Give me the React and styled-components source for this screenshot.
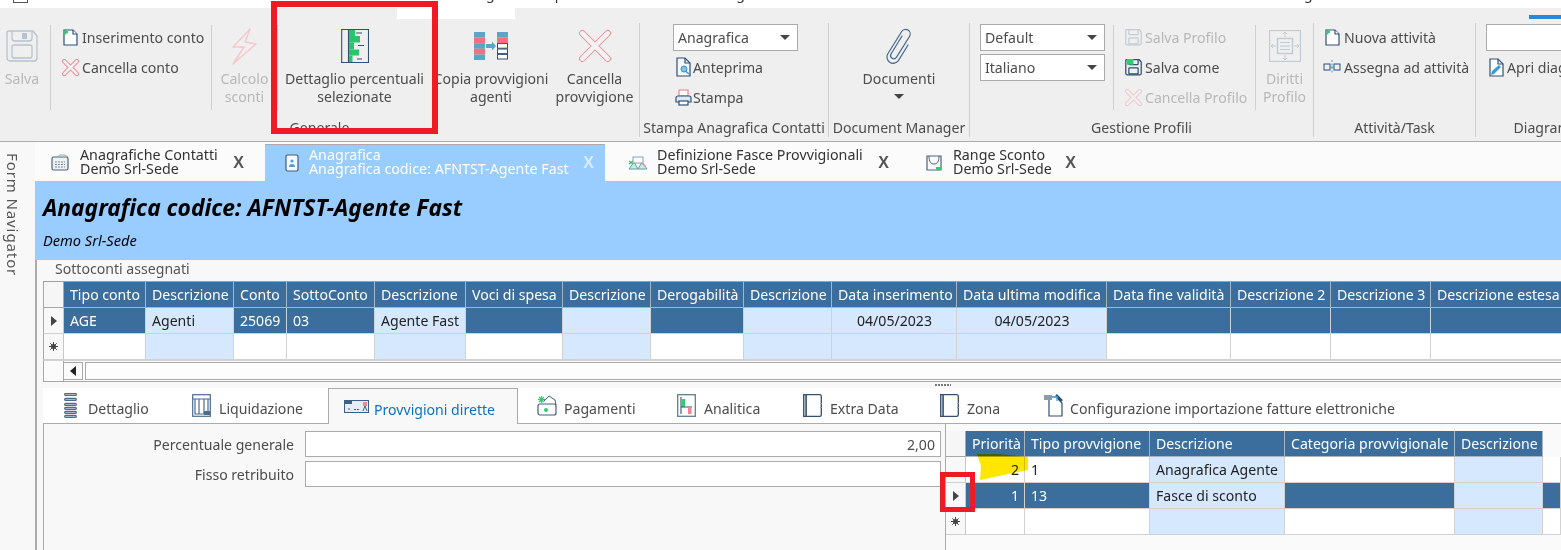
import React from "react";
import styled, { createGlobalStyle } from "styled-components";

const FONT = `"Noto Sans", "Open Sans", "Liberation Sans", sans-serif`;
const NAVY = "#2f4f74";
const PINK = "#f7858f";
const SELECT = "#3b6e9c";
const READONLY = "#d6e8fe";

const Global = createGlobalStyle`
  html, body { margin: 0; padding: 0; background: #f8f8f8; }
  body { width: 1561px; height: 550px; overflow: hidden; font-family: ${FONT}; font-size: 14.1px; color: #4c4c4c; }
  * { box-sizing: border-box; }
`;

const Page = styled.div`
  position: relative;
  width: 1561px;
  height: 550px;
  overflow: hidden;
  display: flex;
  flex-direction: column;
`;

/* ---------- title strip ---------- */
const TitleStrip = styled.div`
  height: 8px;
  flex: none;
  background: #fff;
  overflow: hidden;
  display: flex;
  align-items: flex-end;
`;
const TopFrag = styled.span`
  flex: none;
  margin-left: ${(p) => p.$ml}px;
  height: 8px;
  line-height: 0;
  font-size: 14px;
  color: #333;
  transform: translateY(-6px);
`;
const TopIconStub = styled.span`
  flex: none;
  width: 15px;
  height: 3px;
  margin-left: 13px;
  align-self: flex-start;
  border: 1px solid #555;
  border-top: 0;
`;

/* ---------- ribbon ---------- */
const Ribbon = styled.div`
  flex: none;
  height: 134px;
  background: #efefef;
  border-bottom: 1px solid #ababab;
  overflow: hidden;
  display: flex;
  flex-direction: column;
`;
const RibbonTabLine = styled.div`
  flex: none;
  height: 15px;
  display: flex;
  align-items: flex-start;
`;
const RibbonActive = styled.div`
  width: 118px;
  height: 11px;
  margin-left: 397px;
  background: #fff;
`;
const RibbonMark = styled.div`
  width: 32px;
  height: 4px;
  margin-left: auto;
  margin-top: 7px;
  background: #2b88d8;
`;
const Groups = styled.div`
  display: flex;
  height: 114px;
`;
const Group = styled.div`
  flex: none;
  width: ${(p) => p.$w}px;
  height: 114px;
  border-right: 1px solid #cfcfcf;
  display: flex;
  flex-direction: column;
`;
const GroupBody = styled.div`
  flex: 1;
  display: flex;
  min-height: 0;
`;
const GroupLabel = styled.div`
  flex: none;
  height: 20px;
  line-height: 22px;
  text-align: center;
  white-space: nowrap;
`;
const VSep = styled.div`
  flex: none;
  width: 1px;
  height: 85px;
  margin-top: 2px;
  background: #cfcfcf;
`;
const LargeBtn = styled.div`
  flex: none;
  width: ${(p) => p.$w}px;
  margin-right: ${(p) => p.$mr || 0}px;
  padding-top: 5px;
  display: flex;
  flex-direction: column;
  align-items: center;
  color: ${(p) => (p.$off ? "#b8b8b8" : "#4c4c4c")};
  line-height: 18px;
  text-align: center;
  white-space: nowrap;
`;
const LargeIcon = styled.div`
  height: 36px;
  margin-bottom: 6px;
  display: flex;
  align-items: center;
  justify-content: center;
`;
const SmallCol = styled.div`
  flex: none;
  width: ${(p) => p.$w}px;
  margin-top: -1px;
  padding-left: ${(p) => p.$pl}px;
  display: flex;
  flex-direction: column;
`;
const SmallBtn = styled.div`
  height: 30px;
  display: flex;
  align-items: center;
  gap: ${(p) => p.$gap ?? 2}px;
  white-space: nowrap;
  color: ${(p) => (p.$off ? "#b8b8b8" : "#4c4c4c")};
`;
const SmallIcon = styled.span`
  flex: none;
  width: 20px;
  height: 20px;
  display: flex;
  align-items: center;
  justify-content: center;
`;
const ComboWrap = styled.div`
  height: 30px;
  display: flex;
  align-items: center;
`;
const Combo = styled.div`
  width: 125px;
  height: 27px;
  padding: 0 7px 0 4px;
  background: #fff;
  border: 1px solid #ababab;
  display: flex;
  align-items: center;
  justify-content: space-between;
`;
const Caret = styled.i`
  display: block;
  width: 0;
  height: 0;
  margin-top: ${(p) => p.$mt || 0}px;
  border-left: 5px solid transparent;
  border-right: 5px solid transparent;
  border-top: 5px solid #444;
`;

/* ---------- body ---------- */
const Body = styled.div`
  flex: 1;
  min-height: 0;
  display: flex;
`;
const FormNav = styled.div`
  flex: none;
  width: 35px;
  padding: 11px 12px 0 0;
  writing-mode: vertical-rl;
  font-size: 15px;
  letter-spacing: 0.9px;
  color: #555;
  white-space: nowrap;
`;
const Main = styled.div`
  flex: 1;
  min-width: 0;
  display: flex;
  flex-direction: column;
  overflow: hidden;
`;
const DocTabs = styled.div`
  flex: none;
  height: 39px;
  display: flex;
  align-items: flex-end;
  background: #fbfbfb;
`;
const DocTab = styled.div`
  flex: none;
  width: ${(p) => p.$w}px;
  height: 37px;
  padding: 0 ${(p) => p.$pr}px 0 ${(p) => p.$pl}px;
  display: flex;
  align-items: center;
  gap: ${(p) => p.$gap}px;
  background: ${(p) => (p.$active ? "#99ccff" : "transparent")};
  border-top: 1px solid ${(p) => (p.$active ? "#ababab" : "transparent")};
  color: ${(p) => (p.$active ? "#fff" : "#333")};
`;
const DocTabText = styled.div`
  flex: 1;
  min-width: 0;
  margin-top: -2px;
  font-size: 14.25px;
  line-height: 14px;
  white-space: nowrap;
`;
const DocClose = styled.span`
  flex: none;
  font-family: "Liberation Sans", sans-serif;
  font-weight: 700;
  font-size: 16px;
  color: ${(p) => (p.$active ? "#d8ebff" : "#555")};
`;
const Content = styled.div`
  flex: 1;
  min-height: 0;
  border-left: 2px solid #ababab;
  display: flex;
  flex-direction: column;
`;
const Header = styled.div`
  flex: none;
  height: 79px;
  margin-left: -2px;
  padding: 13px 0 0 8px;
  background: #99ccff;
  color: #000;
`;
const HeaderTitle = styled.div`
  font-size: 22.8px;
  line-height: 28px;
  font-weight: 700;
  font-style: italic;
  white-space: nowrap;
`;
const HeaderSub = styled.div`
  margin-top: 9px;
  font-size: 14.6px;
  line-height: 18px;
  font-style: italic;
`;
const SectionTitle = styled.div`
  flex: none;
  height: 21px;
  padding: 0 0 0 18px;
  line-height: 18px;
  color: #555;
`;
const GridBox = styled.div`
  flex: none;
  margin-left: ${(p) => p.$ml || 0}px;
  width: ${(p) => p.$width}px;
  display: grid;
  grid-template-columns: ${(p) => p.$cols};
  grid-auto-rows: ${(p) => p.$rowH || 26}px;
  border-top: ${(p) => (p.$noTop ? "0" : "1px solid #a0a0a0")};
`;
const Corner = styled.div`
  background: #f6f6f6;
  border-right: 1px solid #a8a8a8;
  border-bottom: 1px solid #a8a8a8;
  border-left: ${(p) => (p.$noLeft ? "0" : "1px solid #a8a8a8")};
`;
const RowHead = styled.div`
  background: #f8f8f8;
  border-right: 1px solid #c8c8c8;
  border-bottom: 1px solid #d0d0d0;
  border-left: ${(p) => (p.$noLeft ? "0" : "1px solid #a8a8a8")};
  display: flex;
  align-items: center;
  justify-content: center;
  color: #444;
`;
const HeadCell = styled.div`
  background: ${SELECT};
  color: #fff;
  padding-left: 6px;
  display: flex;
  align-items: center;
  white-space: nowrap;
  overflow: hidden;
  border-right: 1px solid #a8b4bf;
  border-bottom: 1px solid #a8b4bf;
`;
const HeadGap = styled.div``;
const Cell = styled.div`
  background: ${(p) => (p.$ro ? READONLY : p.$sel ? SELECT : "#fff")};
  color: ${(p) => (p.$ro ? "#222" : p.$sel ? "#fff" : "#222")};
  padding: 0 5px 0 6px;
  display: flex;
  align-items: center;
  justify-content: ${(p) => (p.$align === "right" ? "flex-end" : p.$align === "center" ? "center" : "flex-start")};
  white-space: nowrap;
  overflow: hidden;
  border-right: 1px solid #d2d2d2;
  border-bottom: 1px solid #d2d2d2;
`;
const ScrollRow = styled.div`
  flex: none;
  margin-left: 6px;
  height: 22px;
  display: flex;
  border: 1px solid #a8a8a8;
  border-top: 1px solid #d2d2d2;
  border-right: 0;
  background: #fbfbfb;
`;
const ScrollHead = styled.div`
  flex: none;
  width: 20px;
  border-right: 1px solid #a8a8a8;
`;
const ScrollBtn = styled.div`
  flex: none;
  width: 19px;
  margin: 1px 0 1px 0;
  border: 1px solid #a8a8a8;
  border-left: 0;
  display: flex;
  align-items: center;
  justify-content: center;
`;
const ScrollTrack = styled.div`
  flex: 1;
  margin: 1px 0 1px 2px;
  border: 1px solid #a8a8a8;
  border-right: 0;
  background: #fdfdfd;
`;
const Splitter = styled.div`
  flex: none;
  height: 6px;
  display: flex;
  align-items: center;
  padding-left: 898px;
`;
const SplitterDots = styled.i`
  display: block;
  width: 16px;
  height: 2px;
  background: repeating-linear-gradient(90deg, #777 0 2px, transparent 2px 3px);
`;
const SubTabs = styled.div`
  flex: none;
  height: 36px;
  margin-left: 6px;
  display: flex;
  align-items: stretch;
  background: #fff;
  border-bottom: 1px solid #ababab;
`;
const SubTab = styled.div`
  flex: none;
  width: ${(p) => p.$w}px;
  padding-left: ${(p) => p.$pl}px;
  display: flex;
  align-items: center;
  gap: ${(p) => p.$gap}px;
  white-space: nowrap;
  color: ${(p) => (p.$active ? "#0a72c4" : "#4c4c4c")};
  background: ${(p) => (p.$active ? "#f8f8f8" : "transparent")};
  border: ${(p) => (p.$active ? "1px solid #ababab" : "0")};
  border-bottom: 0;
  margin-bottom: ${(p) => (p.$active ? "-1px" : "0")};
`;
const SubTabLabel = styled.span`
  margin-top: 6px;
`;
const Panel = styled.div`
  flex: 1;
  min-height: 0;
  margin-left: 6px;
  border-left: 1px solid #ababab;
  display: flex;
`;
const FormPane = styled.div`
  flex: none;
  width: 901px;
  padding: 7px 4px 0 0;
  display: flex;
  flex-direction: column;
  gap: 4px;
`;
const FormRow = styled.div`
  display: flex;
  align-items: center;
  gap: 11px;
`;
const FormLabel = styled.div`
  flex: none;
  width: 250px;
  text-align: right;
`;
const FormInput = styled.div`
  flex: 1;
  height: 26px;
  padding: 0 5px;
  background: #fff;
  border: 1px solid #ababab;
  display: flex;
  align-items: center;
  justify-content: flex-end;
`;
const GridPane = styled.div`
  flex: 1;
  min-width: 0;
  padding-top: 7px;
  border-left: 1px solid #ababab;
  background: #fafafa;
  overflow: hidden;
`;
const RedBox = styled.div`
  position: absolute;
  left: ${(p) => p.$x}px;
  top: ${(p) => p.$y}px;
  width: ${(p) => p.$w}px;
  height: ${(p) => p.$h}px;
  border: ${(p) => p.$t}px solid #ed1c24;
  z-index: 5;
`;
const Highlight = styled.svg`
  position: absolute;
  left: 970px;
  top: 450px;
  mix-blend-mode: multiply;
  z-index: 4;
`;

/* ---------- icons ---------- */
const XIcon = ({ s = 18, off }) => (
  <svg width={s} height={s} viewBox="0 0 32 32" opacity={off ? 0.4 : 1}>
    <path d="M4 4L28 28M28 4L4 28" stroke={PINK} strokeWidth={s > 24 ? 6 : 8} strokeLinecap="round" fill="none" />
    <path d="M4 4L28 28M28 4L4 28" stroke="#f3f3f3" strokeWidth={s > 24 ? 4.4 : 5} strokeLinecap="round" fill="none" />
  </svg>
);
const SaveLarge = () => (
  <svg width="32" height="33" viewBox="0 0 32 33" fill="none" stroke="#b8c2cc" strokeWidth="1.3">
    <path d="M3 1H27L31 6V28a3 3 0 0 1-3 3H4a3 3 0 0 1-3-3V3a2 2 0 0 1 2-2z" />
    <path d="M6 1V8a3 3 0 0 0 3 3H23a3 3 0 0 0 3-3V2" />
    <rect x="16" y="3" width="5" height="6" fill="#b8c2cc" stroke="none" />
    <rect x="6" y="15" width="20" height="13" rx="2" />
  </svg>
);
const SaveSmall = ({ color = NAVY, fill, green }) => (
  <svg width="17" height="17" viewBox="0 0 32 33" fill={fill || "none"} stroke={color} strokeWidth="2.4">
    <path d="M3 1H27L31 6V28a3 3 0 0 1-3 3H4a3 3 0 0 1-3-3V3a2 2 0 0 1 2-2z" />
    <path d="M7 1V9a2 2 0 0 0 2 2H23a2 2 0 0 0 2-2V2" />
    <rect x="7" y="17" width="18" height="12" rx="1.5" />
    {green && <rect x="3" y="0" width="13" height="11" fill="#2ecc71" stroke="none" />}
  </svg>
);
const NewDoc = () => (
  <svg width="15" height="17" viewBox="0 0 15 17" fill="none">
    <path d="M1 1H10L14 5V16H1z" fill="#fff" stroke={NAVY} strokeWidth="1.2" />
    <path d="M10 1V5H14" fill="#fff" stroke={NAVY} strokeWidth="1.2" />
    <path d="M2.5 0.5V5.5M0 3H5" stroke="#2ecc71" strokeWidth="1.8" />
  </svg>
);
const Bolt = () => (
  <svg width="25" height="37" viewBox="0 0 25 37" fill="none">
    <path d="M18 1L1 19H12L1 36L24 16L13 14L18 1z" stroke="#f9c6cb" strokeWidth="1.4" strokeLinejoin="round" />
  </svg>
);
const DettaglioIcon = () => (
  <svg width="28" height="34" viewBox="0 0 28 34">
    <path d="M0 .5H28M0 33.5H28" stroke="#33506f" strokeWidth="1" />
    <path d="M.7 0V34M7.5 0V34M27.5 0V34" stroke="#33506f" strokeWidth="1.1" />
    <rect x="8" y="1" width="6" height="6" fill="#27c66b" />
    <rect x="8" y="7" width="11" height="6.5" fill="#27c66b" />
    <rect x="8" y="13.5" width="5" height="7" fill="#27c66b" />
    <rect x="8" y="20.5" width="10" height="6" fill="#27c66b" />
    <rect x="8" y="26.5" width="3.5" height="6.5" fill="#27c66b" />
    <path d="M15 4H21M17 16.5H23M16 30H21" stroke="#33506f" strokeWidth="1" />
  </svg>
);
const CopiaIcon = () => (
  <svg width="34" height="28" viewBox="0 0 34 28">
    {["#5aa6c4", "#f96f80", "#5aa6c4", "#f96f80", "#5aa6c4"].map((c, i) => (
      <rect key={i} x="0" y={i * 5.6} width="11" height="5.6" fill={c} />
    ))}
    <rect x="23" y="0" width="11" height="5.6" fill="#5aa6c4" />
    <rect x="23" y="5.6" width="11" height="5.6" fill="#f96f80" />
    {[11.6, 17, 22.4].map((y) => (
      <rect key={y} x="23.5" y={y} width="10" height="4.6" fill="#fff" stroke="#33506f" strokeWidth="1" />
    ))}
    <path d="M12 12H18V9.5L22 14L18 18.5V16H12z" fill="#5aa6c4" />
  </svg>
);
const PreviewIcon = () => (
  <svg width="15" height="20" viewBox="0 0 15 20" fill="none">
    <path d="M1 1H9L14 6V19H1z" fill="#f5f8fb" stroke={NAVY} strokeWidth="1.2" />
    <path d="M9 1V6H14" stroke={NAVY} strokeWidth="1.2" />
    <circle cx="8" cy="12" r="3" fill="#7dc4e8" stroke="#3d8fc4" />
    <path d="M10 14.5L13 17" stroke="#3d8fc4" strokeWidth="1.4" />
  </svg>
);
const PrintIcon = () => (
  <svg width="17" height="17" viewBox="0 0 17 17" fill="none">
    <rect x="4" y="1" width="9" height="6" fill="#fff" stroke={PINK} strokeWidth="1.2" />
    <path d="M1 13V9a2 2 0 0 1 2-2H14a2 2 0 0 1 2 2V13z" fill="#dfe8f1" stroke={NAVY} strokeWidth="1.2" />
    <rect x="4" y="12" width="9" height="4" fill="#fff" stroke={NAVY} strokeWidth="1.2" />
  </svg>
);
const ClipIcon = () => (
  <svg width="28" height="37" viewBox="0 0 28 37" fill="none" stroke="#45688d" strokeWidth="1.2" strokeLinecap="round">
    <path d="M17 8L6 26a3.2 3.2 0 0 0 5.4 3.4L24.5 8.5a4.6 4.6 0 0 0-7.8-5L3 25.5a6.6 6.6 0 0 0 1.6 8.7 6.4 6.4 0 0 0 8.8-1.6L23 17" />
  </svg>
);
const DirittiIcon = () => (
  <svg width="32" height="32" viewBox="0 0 32 32" fill="none" stroke="#c0cad4" strokeWidth="1">
    <rect x=".5" y=".5" width="31" height="31" strokeWidth="1.2" />
    <rect x="8.5" y="8.5" width="15" height="15" strokeWidth="1.4" />
    <path d="M11 12.5H21M11 16H21M11 19.5H21" />
    <path d="M16 2V7M14 4L16 2L18 4M16 30V25M14 28L16 30L18 28M2 16H7M4 14L2 16L4 18M30 16H25M28 14L30 16L28 18" />
  </svg>
);
const AssignIcon = () => (
  <svg width="18" height="16" viewBox="0 0 18 16" fill="none">
    <rect x="1" y="5" width="6" height="6" stroke={NAVY} />
    <rect x="11" y="5" width="6" height="6" stroke={NAVY} />
    <path d="M9 1V15" stroke="#3d9fd0" strokeDasharray="2 1.5" />
    <path d="M7 8H11" stroke="#3d9fd0" />
  </svg>
);
const DiagIcon = () => (
  <svg width="15" height="19" viewBox="0 0 15 19" fill="none">
    <path d="M1 1H9L14 6V18H1z" fill="#fff" stroke={NAVY} strokeWidth="1.2" />
    <path d="M9 1V6H14" stroke={NAVY} strokeWidth="1.2" />
    <path d="M2 17L3 13L10 7L12 9L5 16z" fill="#3a9bd4" />
  </svg>
);
const TabContacts = () => (
  <svg width="18" height="18" viewBox="0 0 18 18" fill="none">
    <rect x="1" y="3" width="16" height="13" rx="1.5" fill="#eef1f4" stroke="#4c6580" strokeWidth="1.2" />
    <path d="M4 8H14M4 10.5H14M4 13H14" stroke="#7c8a98" strokeWidth="1.2" strokeDasharray="2 1" />
    <path d="M6 3L9 1H14" stroke="#6cc48c" />
    <path d="M14 1L17 3" stroke={PINK} />
  </svg>
);
const TabBook = () => (
  <svg width="18" height="18" viewBox="0 0 18 18" fill="none">
    <rect x="3" y="1" width="12" height="16" rx="1.5" fill="#f4f8fc" stroke="#3d5f82" strokeWidth="1.2" />
    <circle cx="9" cy="7" r="1.6" fill="#4aa3d8" />
    <path d="M6 13a3 3 0 0 1 6 0z" fill="#4aa3d8" />
  </svg>
);
const TabFasce = () => (
  <svg width="20" height="14" viewBox="0 0 20 14" fill="none">
    <path d="M1 13L6 6L10 13zM10 13L14 6L19 13z" fill="#cfe6e6" stroke="#5aa6a0" />
    <rect x="5" y="1" width="10" height="6" fill="#fff" stroke="#7aa3c4" />
    <path d="M1 5L5 8M5 5L1 8" stroke="#2ecc71" strokeWidth="1.4" />
    <path d="M14 7L17 10" stroke={PINK} strokeWidth="1.4" />
  </svg>
);
const TabRange = () => (
  <svg width="16" height="16" viewBox="0 0 16 16" fill="none">
    <path d="M1 1H15V15H1z" stroke="#4c6580" strokeWidth="1.2" />
    <path d="M3 1C3 7 5 9 8 9S13 7 13 1" stroke="#4c6580" />
    <rect x="10" y="12" width="5" height="3" fill="#2ecc71" />
  </svg>
);
const DettTab = () => (
  <svg width="13" height="25" viewBox="0 0 13 25" fill="none" stroke="#4c6c8f" strokeWidth="1.3">
    {[1, 6, 11, 15, 19, 23].map((y) => (
      <rect key={y} x=".7" y={y - 0.5} width="11.6" height="1.8" rx=".9" />
    ))}
  </svg>
);
const LiquidTab = () => (
  <svg width="19" height="23" viewBox="0 0 19 23" fill="none" stroke="#4c6c8f" strokeWidth="1.2">
    <rect x=".7" y=".7" width="17.6" height="21.6" />
    <path d="M.7 5H18.3M3 5V20H16V5M7 5V20M12 5V20" />
    <rect x="12" y="17" width="6" height="4" fill="#4c6c8f" stroke="none" />
  </svg>
);
const CheckTab = () => (
  <svg width="25" height="13" viewBox="0 0 25 13" fill="none">
    <rect x=".5" y=".5" width="24" height="12" fill="#e4edf5" stroke="#3d5f82" />
    <path d="M1 1H8V4H1z" fill="#3d5f82" />
    <path d="M4 9H7M10 9.5H16" stroke="#3d5f82" strokeDasharray="2 1" />
    <rect x="19" y="2" width="4" height="4" fill={PINK} />
    <path d="M19 11L21 6L23 11" stroke="#3d5f82" />
  </svg>
);
const PayTab = () => (
  <svg width="20" height="21" viewBox="0 0 20 21" fill="none">
    <path d="M6 7L12 1L18 5L19 10" stroke="#3d5f82" />
    <rect x="1" y="9" width="18" height="11" rx="2" fill="#fff" stroke="#3d5f82" strokeWidth="1.2" />
    <path d="M2 2L7 7M7 2L2 7M4.5 1V8M1 4.5H8" stroke="#2ecc71" strokeWidth="1.2" />
    <circle cx="9" cy="15" r="2" fill="#2ecc71" />
  </svg>
);
const AnalTab = () => (
  <svg width="19" height="23" viewBox="0 0 19 23" fill="none">
    <rect x=".7" y=".7" width="17.6" height="21.6" stroke="#5f7c9a" strokeWidth="1.3" />
    <rect x="5" y="5" width="3" height="8" fill="#2ecc71" />
    <rect x="11" y="14" width="3.5" height="6" fill={PINK} />
    <path d="M4 3V20M4 13H15" stroke="#33506f" strokeWidth="1.1" />
  </svg>
);
const BookTab = () => (
  <svg width="19" height="23" viewBox="0 0 19 23" fill="none" stroke="#33506f" strokeWidth="1.3">
    <path d="M3 .7H17a1.5 1.5 0 0 1 1.3 1.5V20.8A1.5 1.5 0 0 1 17 22.3H3z" />
    <path d="M.7 .7H3V22.3H.7z" fill="#dce6ef" />
    <path d="M18 9V10" stroke={PINK} strokeWidth="1.6" />
    <path d="M18 13V14" stroke="#2ecc71" strokeWidth="1.6" />
  </svg>
);
const ConfTab = () => (
  <svg width="20" height="23" viewBox="0 0 20 23" fill="none">
    <path d="M6 3H13L19 9V22H6z" fill="#fff" stroke={NAVY} strokeWidth="1.2" />
    <path d="M13 1L19 7" stroke={NAVY} strokeWidth="2.5" />
    <rect x="1" y="1" width="8" height="5" fill="#8d9aa8" />
    <path d="M9 3H14V7" stroke="#4ab0e0" strokeWidth="1.4" />
  </svg>
);
const ArrowRight = ({ c = "#444" }) => (
  <svg width="6" height="10" viewBox="0 0 6 10"><path d="M0 0L6 5L0 10z" fill={c} /></svg>
);
const ArrowLeft = () => (
  <svg width="6" height="10" viewBox="0 0 6 10"><path d="M6 0L0 5L6 10z" fill="#222" /></svg>
);
const Star = () => (
  <svg width="9" height="9" viewBox="0 0 9 9">
    <circle cx="4.5" cy="4.5" r="2.5" fill="#444" />
    <path d="M4.5 0V9M0 4.5H9M1.3 1.3L7.7 7.7M7.7 1.3L1.3 7.7" stroke="#444" strokeWidth="1" />
  </svg>
);

/* ---------- data ---------- */
const topCols = [
  ["Tipo conto", 82], ["Descrizione", 88], ["Conto", 53], ["SottoConto", 88], ["Descrizione", 91],
  ["Voci di spesa", 97], ["Descrizione", 88], ["Derogabilità", 93], ["Descrizione", 88],
  ["Data inserimento", 125], ["Data ultima modifica", 150], ["Data fine validità", 124],
  ["Descrizione 2", 100], ["Descrizione 3", 100], ["Descrizione estesa", 140],
];
const topRo = [1, 4, 6, 8, 9, 10];
const topRow = ["AGE", "Agenti", "25069", "03", "Agente Fast", "", "", "", "", "04/05/2023", "04/05/2023", "", "", "", ""];
const botCols = [["Priorità", 59], ["Tipo provvigione", 125], ["Descrizione", 135], ["Categoria provvigionale", 170], ["Descrizione", 88]];
const botRo = [2, 4];
const botRows = [
  { sel: false, vals: ["2", "1", "Anagrafica Agente", "", ""] },
  { sel: true, vals: ["1", "13", "Fasce di sconto", "", ""] },
  { sel: false, vals: ["", "", "", "", ""] },
];

export default function App() {
  return (
    <Page>
      <Global />
      <TitleStrip>
        <TopIconStub />
        <TopFrag $ml={458}>g</TopFrag>
        <TopFrag $ml={60}>p</TopFrag>
        <TopFrag $ml={173}>g</TopFrag>
        <TopFrag $ml={559}>g</TopFrag>
      </TitleStrip>
      <Ribbon>
        <RibbonTabLine>
          <RibbonActive />
          <RibbonMark />
        </RibbonTabLine>
        <Groups>
          <Group $w={640}>
            <GroupBody>
              <LargeBtn $w={44} $mr={6} $off>
                <LargeIcon><SaveLarge /></LargeIcon>
                Salva
              </LargeBtn>
              <VSep />
              <SmallCol $w={160} $pl={9}>
                <SmallBtn><SmallIcon><NewDoc /></SmallIcon>Inserimento conto</SmallBtn>
                <SmallBtn><SmallIcon><XIcon s={17} /></SmallIcon>Cancella conto</SmallBtn>
              </SmallCol>
              <VSep />
              <LargeBtn $w={65} $off>
                <LargeIcon><Bolt /></LargeIcon>
                Calcolo<br />sconti
              </LargeBtn>
              <VSep />
              <LargeBtn $w={153}>
                <LargeIcon><DettaglioIcon /></LargeIcon>
                Dettaglio percentuali<br />selezionate
              </LargeBtn>
              <LargeBtn $w={120}>
                <LargeIcon><CopiaIcon /></LargeIcon>
                Copia provvigioni<br />agenti
              </LargeBtn>
              <LargeBtn $w={87}>
                <LargeIcon><XIcon s={34} /></LargeIcon>
                Cancella<br />provvigione
              </LargeBtn>
            </GroupBody>
            <GroupLabel>Generale</GroupLabel>
          </Group>
          <Group $w={189}>
            <GroupBody>
              <SmallCol $w={188} $pl={33}>
                <ComboWrap><Combo>Anagrafica<Caret /></Combo></ComboWrap>
                <SmallBtn $gap={0}><SmallIcon><PreviewIcon /></SmallIcon>Anteprima</SmallBtn>
                <SmallBtn $gap={0}><SmallIcon><PrintIcon /></SmallIcon>Stampa</SmallBtn>
              </SmallCol>
            </GroupBody>
            <GroupLabel>Stampa Anagrafica Contatti</GroupLabel>
          </Group>
          <Group $w={141}>
            <GroupBody>
              <LargeBtn $w={140}>
                <LargeIcon><ClipIcon /></LargeIcon>
                Documenti
                <Caret $mt={6} />
              </LargeBtn>
            </GroupBody>
            <GroupLabel>Document Manager</GroupLabel>
          </Group>
          <Group $w={344}>
            <GroupBody>
              <SmallCol $w={143} $pl={10}>
                <ComboWrap><Combo>Default<Caret /></Combo></ComboWrap>
                <ComboWrap><Combo>Italiano<Caret /></Combo></ComboWrap>
              </SmallCol>
              <VSep />
              <SmallCol $w={141} $pl={9}>
                <SmallBtn $off $gap={2}><SmallIcon><SaveSmall color="#c3ccd5" /></SmallIcon>Salva Profilo</SmallBtn>
                <SmallBtn $gap={2}><SmallIcon><SaveSmall green /></SmallIcon>Salva come</SmallBtn>
                <SmallBtn $off $gap={2}><SmallIcon><XIcon s={17} off /></SmallIcon>Cancella Profilo</SmallBtn>
              </SmallCol>
              <VSep />
              <LargeBtn $w={57} $off>
                <LargeIcon><DirittiIcon /></LargeIcon>
                Diritti<br />Profilo
              </LargeBtn>
            </GroupBody>
            <GroupLabel>Gestione Profili</GroupLabel>
          </Group>
          <Group $w={162}>
            <GroupBody>
              <SmallCol $w={161} $pl={8}>
                <SmallBtn><SmallIcon><NewDoc /></SmallIcon>Nuova attività</SmallBtn>
                <SmallBtn><SmallIcon><AssignIcon /></SmallIcon>Assegna ad attività</SmallBtn>
              </SmallCol>
            </GroupBody>
            <GroupLabel>Attività/Task</GroupLabel>
          </Group>
          <Group $w={150}>
            <GroupBody>
              <SmallCol $w={150} $pl={10}>
                <ComboWrap><Combo /></ComboWrap>
                <SmallBtn $gap={1}><SmallIcon><DiagIcon /></SmallIcon>Apri diagramma</SmallBtn>
              </SmallCol>
            </GroupBody>
            <GroupLabel>Diagrammi</GroupLabel>
          </Group>
        </Groups>
      </Ribbon>
      <Body>
        <FormNav>Form Navigator</FormNav>
        <Main>
          <DocTabs>
            <DocTab $w={230} $pl={16} $pr={21} $gap={11}>
              <TabContacts />
              <DocTabText>Anagrafiche Contatti<br />Demo Srl-Sede</DocTabText>
              <DocClose>X</DocClose>
            </DocTab>
            <DocTab $w={340} $active $pl={18} $pr={11} $gap={8}>
              <TabBook />
              <DocTabText>Anagrafica<br />Anagrafica codice: AFNTST-Agente Fast</DocTabText>
              <DocClose $active>X</DocClose>
            </DocTab>
            <DocTab $w={305} $pl={23} $pr={21} $gap={9}>
              <TabFasce />
              <DocTabText>Definizione Fasce Provvigionali<br />Demo Srl-Sede</DocTabText>
              <DocClose>X</DocClose>
            </DocTab>
            <DocTab $w={180} $pl={16} $pr={14} $gap={11}>
              <TabRange />
              <DocTabText>Range Sconto<br />Demo Srl-Sede</DocTabText>
              <DocClose>X</DocClose>
            </DocTab>
          </DocTabs>
          <Content>
            <Header>
              <HeaderTitle>Anagrafica codice: AFNTST-Agente Fast</HeaderTitle>
              <HeaderSub>Demo Srl-Sede</HeaderSub>
            </Header>
            <SectionTitle>Sottoconti assegnati</SectionTitle>
            <GridBox
              $ml={6}
              $width={1524}
              $cols={`21px ${topCols.map((c) => c[1] + "px").join(" ")}`}
            >
              <Corner />
              {topCols.map(([t], i) => <HeadCell key={i}>{t}</HeadCell>)}
              <RowHead><ArrowRight /></RowHead>
              {topRow.map((v, i) => (
                <Cell key={i} $sel={!topRo.includes(i)} $ro={topRo.includes(i)} $align={i === 9 || i === 10 ? "center" : "left"}>{v}</Cell>
              ))}
              <RowHead><Star /></RowHead>
              {topRow.map((_, i) => <Cell key={i} $ro={topRo.includes(i)} />)}
            </GridBox>
            <ScrollRow>
              <ScrollHead />
              <ScrollBtn><ArrowLeft /></ScrollBtn>
              <ScrollTrack />
            </ScrollRow>
            <Splitter><SplitterDots /></Splitter>
            <SubTabs>
              <SubTab $w={135} $pl={21} $gap={11}><DettTab /><SubTabLabel>Dettaglio</SubTabLabel></SubTab>
              <SubTab $w={150} $pl={14} $gap={8}><LiquidTab /><SubTabLabel>Liquidazione</SubTabLabel></SubTab>
              <SubTab $w={190} $pl={15} $gap={5} $active><CheckTab /><SubTabLabel>Provvigioni dirette</SubTabLabel></SubTab>
              <SubTab $w={142} $pl={19} $gap={7}><PayTab /><SubTabLabel>Pagamenti</SubTabLabel></SubTab>
              <SubTab $w={125} $pl={17} $gap={8}><AnalTab /><SubTabLabel>Analitica</SubTabLabel></SubTab>
              <SubTab $w={135} $pl={18} $gap={8}><BookTab /><SubTabLabel>Extra Data</SubTabLabel></SubTab>
              <SubTab $w={105} $pl={20} $gap={8}><BookTab /><SubTabLabel>Zona</SubTabLabel></SubTab>
              <SubTab $w={500} $pl={18} $gap={7}><ConfTab /><SubTabLabel>Configurazione importazione fatture elettroniche</SubTabLabel></SubTab>
            </SubTabs>
            <Panel>
              <FormPane>
                <FormRow>
                  <FormLabel>Percentuale generale</FormLabel>
                  <FormInput>2,00</FormInput>
                </FormRow>
                <FormRow>
                  <FormLabel>Fisso retribuito</FormLabel>
                  <FormInput />
                </FormRow>
              </FormPane>
              <GridPane>
                <GridBox
                  $noTop
                  $width={615}
                  $cols={`20px ${botCols.map((c) => c[1] + "px").join(" ")} 18px`}
                >
                  <Corner $noLeft />
                  {botCols.map(([t], i) => <HeadCell key={i}>{t}</HeadCell>)}
                  <HeadGap />
                  {botRows.map((r, ri) => (
                    <React.Fragment key={ri}>
                      <RowHead $noLeft>{ri === 1 && <ArrowRight />}{ri === 2 && <Star />}</RowHead>
                      {r.vals.map((v, i) => (
                        <Cell key={i} $sel={r.sel && !botRo.includes(i)} $ro={botRo.includes(i)} $align={i === 0 ? "right" : "left"}>{v}</Cell>
                      ))}
                      <Cell $sel={r.sel} />
                    </React.Fragment>
                  ))}
                </GridBox>
              </GridPane>
            </Panel>
          </Content>
        </Main>
      </Body>
      <Highlight width="60" height="32" viewBox="0 0 60 32">
        <path d="M7 4L30 4L58 7V20L10 30L11 16z" fill="#ffe600" />
      </Highlight>
      <RedBox $x={271} $y={1} $w={167} $h={133} $t={6} />
      <RedBox $x={940} $y={472} $w={35} $h={40} $t={5} />
    </Page>
  );
}
